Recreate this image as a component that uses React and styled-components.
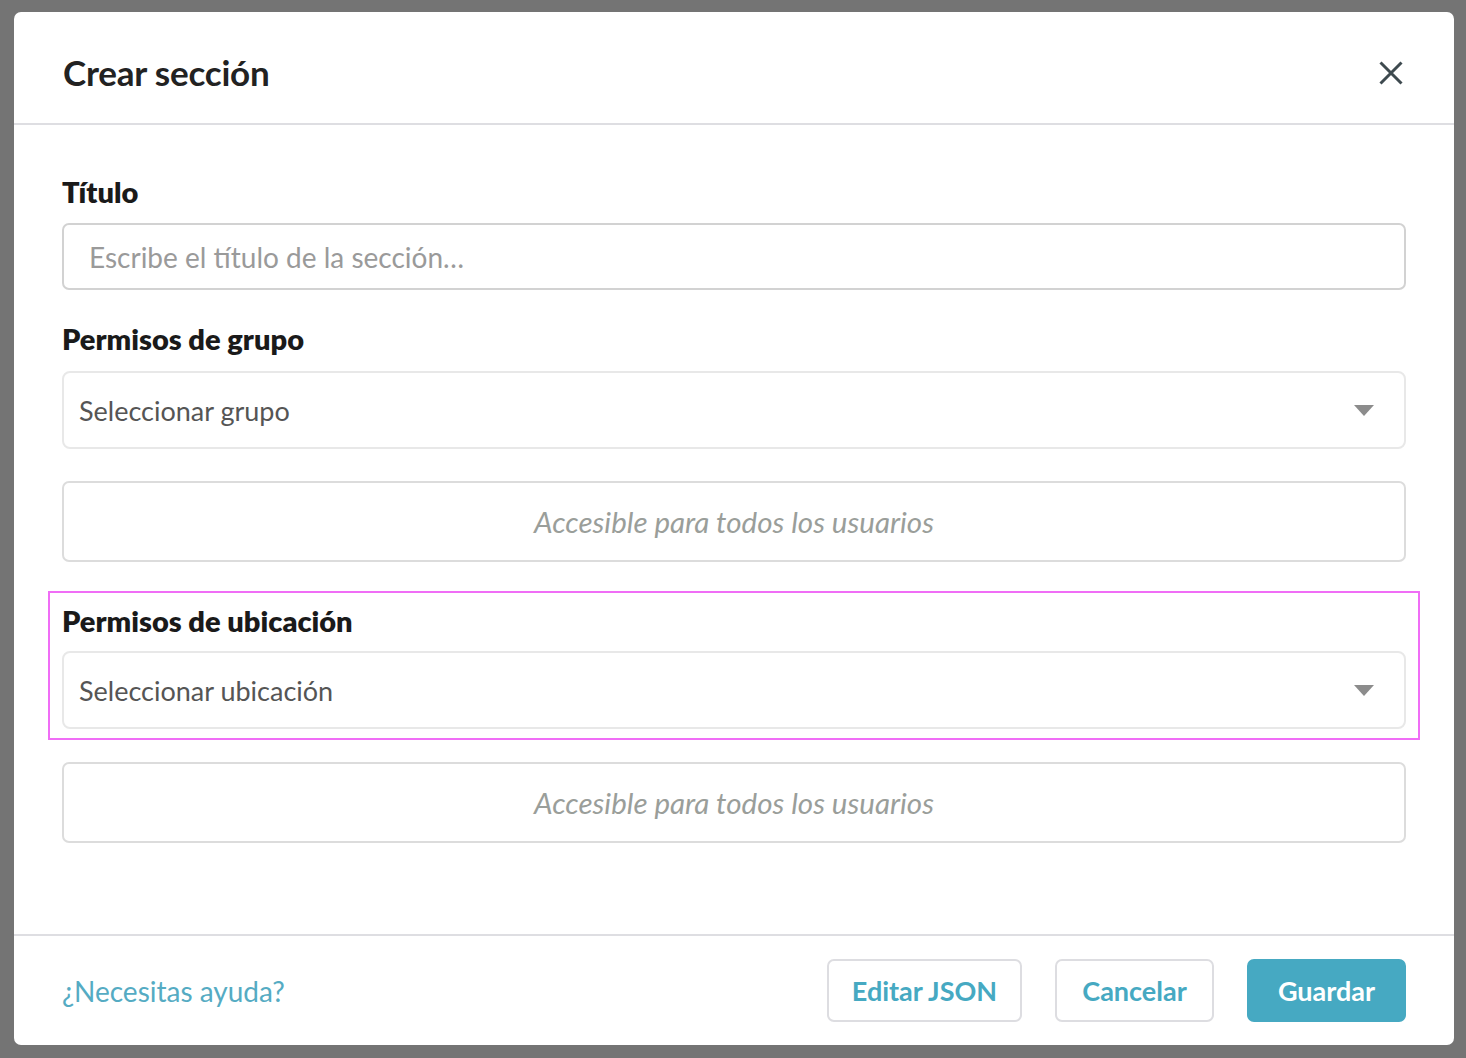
import styled, { createGlobalStyle } from "styled-components";

const GlobalStyle = createGlobalStyle`
  html, body {
    margin: 0;
    padding: 0;
    background: #747474;
    font-family: Lato, "Open Sans", sans-serif;
  }
  * {
    box-sizing: border-box;
  }
`;

const Backdrop = styled.div`
  width: 1466px;
  height: 1058px;
  padding: 12px 12px 13px 14px;
  background: #747474;
`;

const Modal = styled.div`
  display: flex;
  flex-direction: column;
  width: 1440px;
  height: 1033px;
  background: #fff;
  border-radius: 7px;
  overflow: hidden;
`;

const Header = styled.div`
  display: flex;
  align-items: center;
  justify-content: space-between;
  height: 113px;
  padding: 8px 51px 0 49px;
  border-bottom: 2px solid #dedee2;
`;

const Title = styled.h1`
  margin: 0;
  font-size: 35px;
  font-weight: 700;
  color: #222;
  letter-spacing: -0.2px;
`;

const CloseButton = styled.button`
  display: flex;
  padding: 2px 0 0 0;
  border: none;
  background: none;
  cursor: pointer;
`;

const Body = styled.div`
  flex: 1;
  display: flex;
  flex-direction: column;
  padding: 51px 48px 0 48px;
`;

const Label = styled.div`
  font-size: 29px;
  line-height: 32px;
  font-weight: 800;
  color: #1a1a1a;
  margin-bottom: ${({ mb }) => mb || 15}px;
`;

const Input = styled.input`
  width: 100%;
  height: 67px;
  padding: 0 25px;
  border: 2px solid #d2d2d2;
  border-radius: 7px;
  font-family: inherit;
  font-size: 28px;
  color: #333;
  outline: none;
  margin-bottom: 33px;

  &::placeholder {
    color: #9a9a9a;
  }
`;

const Select = styled.div`
  display: flex;
  align-items: center;
  justify-content: space-between;
  height: 78px;
  padding: 0 30px 0 15px;
  border: 2px solid #e8e8e8;
  border-radius: 8px;
  font-size: 27px;
  color: #555;
  margin-bottom: ${({ mb }) => mb || 0}px;
`;

const Empty = styled.div`
  display: flex;
  align-items: center;
  justify-content: center;
  height: 81px;
  border: 2px solid #dcdcdc;
  border-radius: 7px;
  font-size: 29.5px;
  font-style: italic;
  color: #9a9e9a;
  margin-top: ${({ mt }) => mt || 0}px;
`;

const Highlight = styled.div`
  margin: 29px -14px 0 -14px;
  padding: 12px 12px 9px 12px;
  border: 2px solid #f06df6;
`;

const Footer = styled.div`
  display: flex;
  align-items: center;
  justify-content: space-between;
  height: 111px;
  padding: 0 48px;
  border-top: 2px solid #dedee2;
`;

const HelpLink = styled.a`
  font-size: 28px;
  color: #55abc3;
  text-decoration: none;
  cursor: pointer;
`;

const Actions = styled.div`
  display: flex;
  gap: 33px;
`;

const Button = styled.button`
  width: ${({ w }) => w}px;
  height: 63px;
  border-radius: 7px;
  border: 2px solid ${({ primary }) => (primary ? "#46a9c2" : "#dddde1")};
  background: ${({ primary }) => (primary ? "#46a9c2" : "#fff")};
  color: ${({ primary }) => (primary ? "#fff" : "#46a9c2")};
  font-family: inherit;
  font-size: 27px;
  font-weight: 700;
  cursor: pointer;
`;

const Caret = () => (
  <svg width="20" height="11" viewBox="0 0 20 11">
    <path d="M0 0 L20 0 L10 11 Z" fill="#8c8c8c" />
  </svg>
);

const CloseIcon = () => (
  <svg width="24" height="24" viewBox="0 0 24 24">
    <path
      d="M1.5 1.5 L22.5 22.5 M22.5 1.5 L1.5 22.5"
      stroke="#3e4a4f"
      strokeWidth="3"
    />
  </svg>
);

const App = () => {
  return (
    <Backdrop>
      <GlobalStyle />
      <Modal>
        <Header>
          <Title>Crear sección</Title>
          <CloseButton aria-label="Cerrar">
            <CloseIcon />
          </CloseButton>
        </Header>
        <Body>
          <Label>Título</Label>
          <Input placeholder="Escribe el título de la sección…" />
          <Label mb={16}>Permisos de grupo</Label>
          <Select>
            Seleccionar grupo
            <Caret />
          </Select>
          <Empty mt={32}>Accesible para todos los usuarios</Empty>
          <Highlight>
            <Label mb={14}>Permisos de ubicación</Label>
            <Select>
              Seleccionar ubicación
              <Caret />
            </Select>
          </Highlight>
          <Empty mt={22}>Accesible para todos los usuarios</Empty>
        </Body>
        <Footer>
          <HelpLink>¿Necesitas ayuda?</HelpLink>
          <Actions>
            <Button w={195}>Editar JSON</Button>
            <Button w={159}>Cancelar</Button>
            <Button w={159} primary>
              Guardar
            </Button>
          </Actions>
        </Footer>
      </Modal>
    </Backdrop>
  );
};

export default App;
